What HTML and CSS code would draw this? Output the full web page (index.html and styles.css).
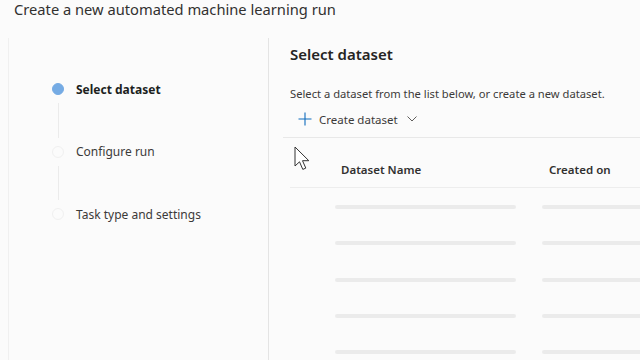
FILE: index.html
```html
<!DOCTYPE html>
<html lang="en">
<head>
  <meta charset="UTF-8" />
  <title>Create a new automated machine learning run</title>
  <link rel="stylesheet" href="styles.css">
</head>
<body>
  <h1 class="title">Create a new automated machine learning run</h1>

  <div class="wizard">
    <div class="steps">
      <div class="step active">
        <span class="dot"></span>
        <span class="label">Select dataset</span>
      </div>
      <div class="connector"></div>
      <div class="step">
        <span class="dot"></span>
        <span class="label">Configure run</span>
      </div>
      <div class="connector"></div>
      <div class="step">
        <span class="dot"></span>
        <span class="label">Task type and settings</span>
      </div>
    </div>

    <div class="content">
      <h2>Select dataset</h2>
      <p class="desc">Select a dataset from the list below, or create a new dataset.</p>
      <button class="create">
        <svg width="14" height="14" viewBox="0 0 14 14"><path d="M7 0.5v13M0.5 7h13" stroke="#0f6cbd" stroke-width="1.1" fill="none"/></svg>
        Create dataset
        <svg class="chev" width="10" height="6" viewBox="0 0 10 6"><path d="M0.5 0.5l4.5 4.5 4.5-4.5" stroke="#605e5c" stroke-width="1" fill="none"/></svg>
      </button>

      <div class="table">
        <div class="head">
          <span class="col-name">Dataset Name</span>
          <span class="col-date">Created on</span>
        </div>
        <div class="rows">
          <div class="row"><span class="bar name"></span><span class="bar date"></span></div>
          <div class="row"><span class="bar name"></span><span class="bar date"></span></div>
          <div class="row"><span class="bar name"></span><span class="bar date"></span></div>
          <div class="row"><span class="bar name"></span><span class="bar date"></span></div>
          <div class="row"><span class="bar name"></span><span class="bar date"></span></div>
        </div>
      </div>

      <svg class="cursor" width="18" height="26" viewBox="0 0 18 26"><path d="M1 1v19l4.5-4.2 3.3 7.6 3-1.3-3.3-7.4h6.3z" fill="#fff" stroke="#333" stroke-width="1"/></svg>
    </div>
  </div>
</body>
</html>
```

FILE: styles.css
```css
body {
  margin: 0;
  background: #fbfbfb;
  font-family: "Noto Sans", "Open Sans", sans-serif;
  color: #323130;
  overflow: hidden;
}
.title {
  margin: 0;
  padding: 0 0 0 14px;
  height: 38px;
  font-size: 14.7px;
  font-weight: 400;
  line-height: 19px;
}
.wizard {
  display: flex;
  height: 322px;
  margin-left: 8px;
  border-left: 1px solid #f0f0f0;
}
.steps {
  flex-shrink: 0;
  width: 260px;
  border-right: 1px solid #e4e4e4;
  padding-top: 41px;
  box-sizing: border-box;
}
.step {
  display: flex;
  align-items: center;
  height: 20px;
  padding-left: 43px;
}
.dot {
  width: 12px;
  height: 12px;
  border-radius: 50%;
  border: 1px solid #f0f0f0;
  box-sizing: border-box;
  margin-right: 12px;
}
.step.active .dot {
  background: #75abe4;
  border-color: #75abe4;
}
.label {
  font-size: 12px;
  color: #3b3a39;
}
.step.active .label {
  font-weight: 700;
  color: #201f1e;
}
.connector {
  width: 1px;
  height: 34.5px;
  margin: 4px 0 4px 49px;
  background: #ebebeb;
}
.content {
  position: relative;
  flex: 1;
  min-width: 0;
  overflow: hidden;
  padding-top: 5px;
}
h2 {
  margin: 0 0 0 21px;
  font-size: 15px;
  font-weight: 600;
  line-height: 22px;
  color: #252423;
}
.desc {
  margin: 21px 0 0 21px;
  font-size: 11.2px;
  line-height: 16px;
  color: #3b3a39;
}
.create {
  display: flex;
  align-items: center;
  gap: 7px;
  margin: 8px 0 0 29px;
  padding: 0;
  border: none;
  background: none;
  font-family: inherit;
  font-size: 11.5px;
  color: #3b3a39;
  height: 18px;
}
.create .chev {
  margin-left: 2px;
}
.table {
  margin: 9px 0 0 14px;
  border-top: 1px solid #e8e8e8;
}
.head {
  display: flex;
  height: 50px;
  padding-top: 24px;
  box-sizing: border-box;
  line-height: 16px;
  margin-left: 7px;
  border-bottom: 1px solid #ededed;
  font-size: 11.5px;
  font-weight: 600;
  color: #323130;
}
.col-name {
  width: 208px;
  padding-left: 51px;
}
.rows {
  padding-top: 1px;
}
.row {
  display: flex;
  align-items: center;
  height: 36.3px;
  padding-left: 52px;
}
.bar {
  flex-shrink: 0;
  height: 4px;
  border-radius: 2px;
  background: #ebebeb;
}
.bar.name {
  width: 181px;
}
.bar.date {
  width: 110px;
  margin-left: 26px;
}
.cursor {
  position: absolute;
  left: 25px;
  top: 108px;
}
```
